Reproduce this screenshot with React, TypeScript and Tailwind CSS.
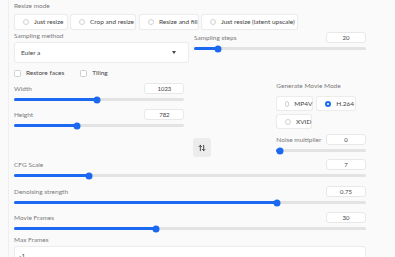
import { ArrowUpDown } from "lucide-react";

const font = { fontFamily: "Lato, 'Open Sans', sans-serif" };

function Track({ pct }: { pct: number }) {
  return (
    <div className="relative h-[3px] rounded-full bg-[#e3e3e3]">
      <div className="absolute inset-y-0 left-0 right-[3.5px]">
        <div className="h-full rounded-l-full bg-[#1a69f0]" style={{ width: `calc(${pct}% + 3.5px)` }} />
      </div>
      <div className="absolute inset-y-0 left-[3.5px] right-[3.5px]">
        <div
          className="absolute top-1/2 h-[7px] w-[7px] -translate-x-1/2 -translate-y-1/2 rounded-full bg-[#1a69f0]"
          style={{ left: `${pct}%` }}
        />
      </div>
    </div>
  );
}

function NumBox({ value }: { value: string }) {
  return (
    <div className="flex h-[11px] w-[40px] items-center justify-center rounded-[3px] border border-[#e8e8e8] bg-white text-[6px] text-[#444]">
      {value}
    </div>
  );
}

function SliderField({ label, value, pct, className = "" }: { label: string; value: string; pct: number; className?: string }) {
  return (
    <div className={className}>
      <div className="flex h-[11px] items-center justify-between">
        <span className="text-[6.5px] leading-[8px] text-[#7a7a7a]">{label}</span>
        <NumBox value={value} />
      </div>
      <div className="mt-[4px]">
        <Track pct={pct} />
      </div>
    </div>
  );
}

function Radio({ label, checked = false, className = "" }: { label: string; checked?: boolean; className?: string }) {
  return (
    <div
      className={`flex items-center gap-[5px] rounded-[3px] border border-[#ececec] bg-white pl-[8px] text-[6.5px] text-[#444] shadow-[0_0_1px_rgba(0,0,0,0.06)] ${className}`}
    >
      {checked ? (
        <span className="h-[6px] w-[6px] rounded-full border-[2px] border-[#1a69f0] bg-white" />
      ) : (
        <span className="h-[6px] w-[6px] rounded-full border border-[#d2d2d2] bg-white" />
      )}
      <span>{label}</span>
    </div>
  );
}

function Checkbox({ label }: { label: string }) {
  return (
    <div className="flex items-center gap-[5px] text-[6.5px] text-[#444]">
      <span className="h-[7px] w-[7px] rounded-[1.5px] border border-[#cfcfcf] bg-white" />
      <span>{label}</span>
    </div>
  );
}

export default function App() {
  return (
    <div className="h-[257px] w-[395px] overflow-hidden bg-[#fafafa] pl-[8px]" style={font}>
      <div className="h-full w-[358px] border-l border-[#efefef] pl-[5px] pt-[2px]">
        <div className="text-[6.5px] leading-[8px] text-[#7a7a7a]">Resize mode</div>
        <div className="mt-[4px] flex h-[16px] gap-[2px]">
          <Radio label="Just resize" className="w-[54px]" />
          <Radio label="Crop and resize" className="w-[66px]" />
          <Radio label="Resize and fill" className="ml-[1px] w-[60px]" />
          <Radio label="Just resize (latent upscale)" className="w-[97px]" />
        </div>

        <div className="flex gap-[5px]">
          <div className="w-[175px]">
            <div className="mt-[2px] text-[6.5px] leading-[8px] text-[#7a7a7a]">Sampling method</div>
            <div className="mt-[2px] flex h-[21px] items-center justify-between rounded-[3px] border border-[#ececec] bg-white pl-[6px] pr-[12px] text-[6.5px] text-[#444]">
              <span>Euler a</span>
              <svg width="4" height="3" viewBox="0 0 4 3">
                <path d="M0 0h4L2 3z" fill="#444" />
              </svg>
            </div>
          </div>
          <SliderField label="Sampling steps" value="20" pct={12.3} className="mt-[2px] flex-1" />
        </div>

        <div className="flex">
          <div className="w-[171px]">
            <div className="mt-[6px] flex h-[8px] items-center">
              <Checkbox label="Restore faces" />
              <div className="ml-[16px]">
                <Checkbox label="Tiling" />
              </div>
            </div>
            <SliderField label="Width" value="1023" pct={48.8} className="mt-[6px]" />
            <SliderField label="Height" value="782" pct={36.5} className="mt-[8px]" />
          </div>
          <div className="ml-[9px] mt-[75px] flex h-[19px] w-[18px] items-center justify-center rounded-[3px] bg-[#ececec] text-[#333]">
            <ArrowUpDown size={8} strokeWidth={2.6} />
          </div>
          <div className="ml-[65px] w-[90px]">
            <div className="mt-[19px] text-[6.5px] leading-[8px] text-[#7a7a7a]">Generate Movie Mode</div>
            <div className="mt-[6px] flex h-[15px] gap-[3px]">
              <Radio label="MP4V" className="w-[37px]" />
              <Radio label="H.264" checked className="w-[40px]" />
            </div>
            <div className="mt-[3px] flex h-[15px]">
              <Radio label="XVID" className="w-[36px]" />
            </div>
            <SliderField label="Noise multiplier" value="0" pct={0} className="mt-[5px]" />
          </div>
        </div>

        <SliderField label="CFG Scale" value="7" pct={20.7} className="mt-[2px]" />
        <SliderField label="Denoising strength" value="0.75" pct={75.2} className="mt-[9px]" />
        <SliderField label="Movie Frames" value="30" pct={40} className="mt-[8px]" />

        <div className="mt-[6px] text-[6.5px] leading-[8px] text-[#7a7a7a]">Max Frames</div>
        <div className="mt-[2px] flex h-[20px] items-start rounded-[3px] border border-[#ececec] bg-white pl-[4px] pt-[5px] text-[6.5px] leading-[8px] text-[#444]">
          -1
        </div>
      </div>
    </div>
  );
}
